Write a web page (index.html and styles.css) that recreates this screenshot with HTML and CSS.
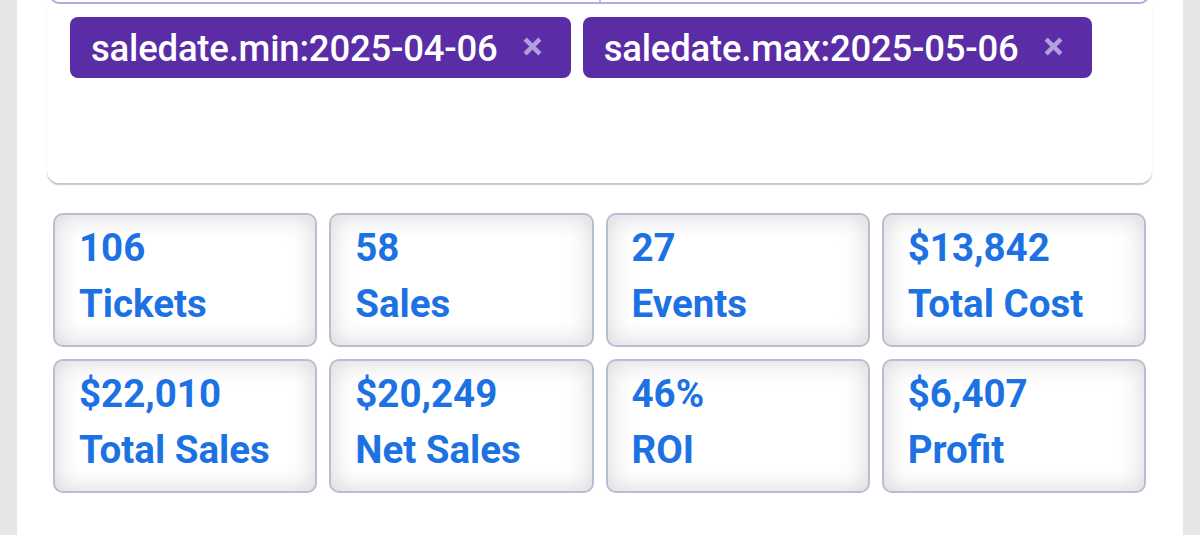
FILE: index.html
```html
<!DOCTYPE html>
<html lang="en">
<head>
<meta charset="utf-8">
<title>Sales summary</title>
<link rel="stylesheet" href="styles.css">
</head>
<body>
<div class="page">
  <section class="filter-card">
    <div class="inputs">
      <div class="input-cell"></div>
      <div class="input-cell"></div>
    </div>
    <div class="chips">
      <span class="chip">saledate.min:2025-04-06<svg class="chip-x" viewBox="0 0 20 20" aria-hidden="true"><path d="M3 3L17 17M17 3L3 17"/></svg></span>
      <span class="chip">saledate.max:2025-05-06<svg class="chip-x" viewBox="0 0 20 20" aria-hidden="true"><path d="M3 3L17 17M17 3L3 17"/></svg></span>
    </div>
  </section>
  <section class="stats">
    <div class="stat"><div class="stat-value">106</div><div class="stat-label">Tickets</div></div>
    <div class="stat"><div class="stat-value">58</div><div class="stat-label">Sales</div></div>
    <div class="stat"><div class="stat-value">27</div><div class="stat-label">Events</div></div>
    <div class="stat"><div class="stat-value">$13,842</div><div class="stat-label">Total Cost</div></div>
    <div class="stat"><div class="stat-value">$22,010</div><div class="stat-label">Total Sales</div></div>
    <div class="stat"><div class="stat-value">$20,249</div><div class="stat-label">Net Sales</div></div>
    <div class="stat"><div class="stat-value">46%</div><div class="stat-label">ROI</div></div>
    <div class="stat"><div class="stat-value">$6,407</div><div class="stat-label">Profit</div></div>
  </section>
</div>
</body>
</html>
```
FILE: styles.css
```css
html, body {
  margin: 0;
  padding: 0;
}
body {
  background: #e4e6e7;
  font-family: Roboto, "Noto Sans", "Liberation Sans", sans-serif;
  overflow: hidden;
}
.page {
  display: flow-root;
  margin: 0 17px;
  height: 535px;
  background: #ffffff;
  padding: 0 31px 0 30px;
}
.filter-card {
  display: flow-root;
  background: #fff;
  border-radius: 0 0 12px 12px;
  box-shadow: 0 2px 1px rgba(0, 0, 0, 0.22);
  padding: 0 3px 105px 3px;
}
.inputs {
  display: flex;
  margin-top: -40px;
  height: 42px;
  border: 2px solid #b9a7e4;
  border-top: none;
  border-radius: 0 0 9px 9px;
}
.input-cell {
  flex: 1;
}
.input-cell + .input-cell {
  border-left: 2px solid #c9c3d6;
}
.chips {
  display: flex;
  gap: 12px;
  margin-top: 13px;
  padding-left: 20px;
}
.chip {
  display: inline-flex;
  align-items: center;
  height: 61px;
  padding: 2px 28px 0 21px;
  box-sizing: border-box;
  background: #5a2da6;
  color: #ffffff;
  border-radius: 8px;
  font-size: 36.5px;
  font-weight: 500;
  letter-spacing: -0.2px;
}
.chip-x {
  width: 21px;
  height: 21px;
  margin-left: 24px;
  margin-top: -4px;
  fill: none;
  stroke: #b29fe0;
  stroke-width: 4.2;
  stroke-linecap: butt;
}
.stats {
  display: grid;
  grid-template-columns: repeat(4, 1fr);
  grid-auto-rows: 134px;
  gap: 12px;
  padding: 30px 6px 0 6px;
}
.stat {
  border: 2px solid #b6bed1;
  border-radius: 10px;
  background: #ffffff;
  box-shadow: inset 0 0 26px rgba(0, 0, 0, 0.17);
  padding: 5px 24px 0 24px;
  color: #1d72e3;
  font-size: 38.5px;
  font-weight: 700;
  line-height: 56px;
}
```
